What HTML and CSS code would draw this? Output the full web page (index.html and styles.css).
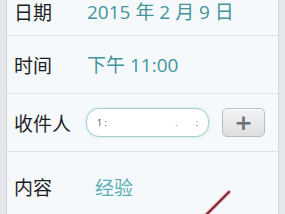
FILE: index.html
```html
<!DOCTYPE html>
<html lang="zh">
<head>
<meta charset="utf-8">
<link rel="stylesheet" href="styles.css">
</head>
<body>
<div class="frame">
  <div class="edge edge-left"></div>
  <div class="form">
    <div class="row row-first">
      <span class="label">日期</span>
      <span class="value">2015 年 2 月 9 日</span>
    </div>
    <div class="row">
      <span class="label">时间</span>
      <span class="value">下午 11:00</span>
    </div>
    <div class="row">
      <span class="label">收件人</span>
      <div class="recipient">
        <span class="mark mark-a">1 :</span>
        <span class="mark mark-b">.</span>
        <span class="mark mark-c">:</span>
      </div>
      <div class="add-btn">+</div>
    </div>
    <div class="row row-last">
      <span class="label">内容</span>
      <span class="value value-light">经验</span>
    </div>
    <svg class="pen" width="40" height="30" viewBox="0 0 40 30">
      <line x1="30" y1="2" x2="6" y2="26" stroke="#f3c4c8" stroke-width="4.5" stroke-linecap="round"/>
      <line x1="30" y1="2" x2="6" y2="26" stroke="#7c2b36" stroke-width="2.2" stroke-linecap="round"/>
    </svg>
  </div>
  <div class="edge edge-right"></div>
</div>
</body>
</html>
```

FILE: styles.css
```css
* { box-sizing: border-box; }
html, body {
  margin: 0;
  padding: 0;
  width: 285px;
  height: 214px;
  overflow: hidden;
  background: #e6e8eb;
}
.frame {
  display: flex;
  width: 285px;
  height: 214px;
  font-family: "Open Sans", "Noto Sans CJK SC", sans-serif;
}
.edge {
  width: 6px;
  background: #e5e7ea;
}
.edge-left { border-right: 1px solid #cfd3d7; width: 7px; }
.edge-right { border-left: 1px solid #d4d8dc; width: 7px; }
.form {
  flex: 1;
  position: relative;
  background: #f5f9fc;
  display: flex;
  flex-direction: column;
}
.row {
  display: flex;
  align-items: center;
  height: 58px;
  padding-left: 7px;
  border-bottom: 1px solid #dde3e8;
}
.row-first {
  height: 36px;
  padding-bottom: 11px;
}
.row-last {
  border-bottom: none;
  padding-top: 12px;
}
.label {
  width: 73px;
  font-family: "Noto Sans CJK SC", sans-serif;
  font-size: 19px;
  color: #1e1e1e;
  line-height: 22px;
}
.value {
  font-size: 19px;
  color: #44949a;
  line-height: 22px;
  font-family: "Open Sans", "Noto Sans CJK SC", sans-serif;
}
.value-light {
  color: #5aaeb2;
  padding-left: 8px;
  font-family: "Noto Sans CJK SC", sans-serif;
}
.recipient {
  position: relative;
  width: 123px;
  height: 29px;
  margin-left: -1px;
  border: 1px solid #a6cfcd;
  border-radius: 13px;
  background: #ffffff;
  box-shadow: 0 0 2px 1px #d9efee;
  display: flex;
  align-items: center;
  padding: 0 10px;
  font-size: 9px;
  color: #444;
}
.mark-b { margin-left: auto; margin-right: 18px; color: #888; }
.mark-c { color: #555; }
.add-btn {
  margin-left: 13px;
  width: 43px;
  height: 29px;
  border: 1px solid #b9bcc0;
  border-radius: 5px;
  background: linear-gradient(#f2f3f4, #dcdee0);
  box-shadow: inset 0 1px 0 #ffffff;
  display: flex;
  align-items: center;
  justify-content: center;
  font-family: "DejaVu Sans", sans-serif;
  font-weight: bold;
  font-size: 22px;
  color: #6e7276;
  line-height: 1;
}
.pen {
  position: absolute;
  left: 192px;
  top: 190px;
}
```
